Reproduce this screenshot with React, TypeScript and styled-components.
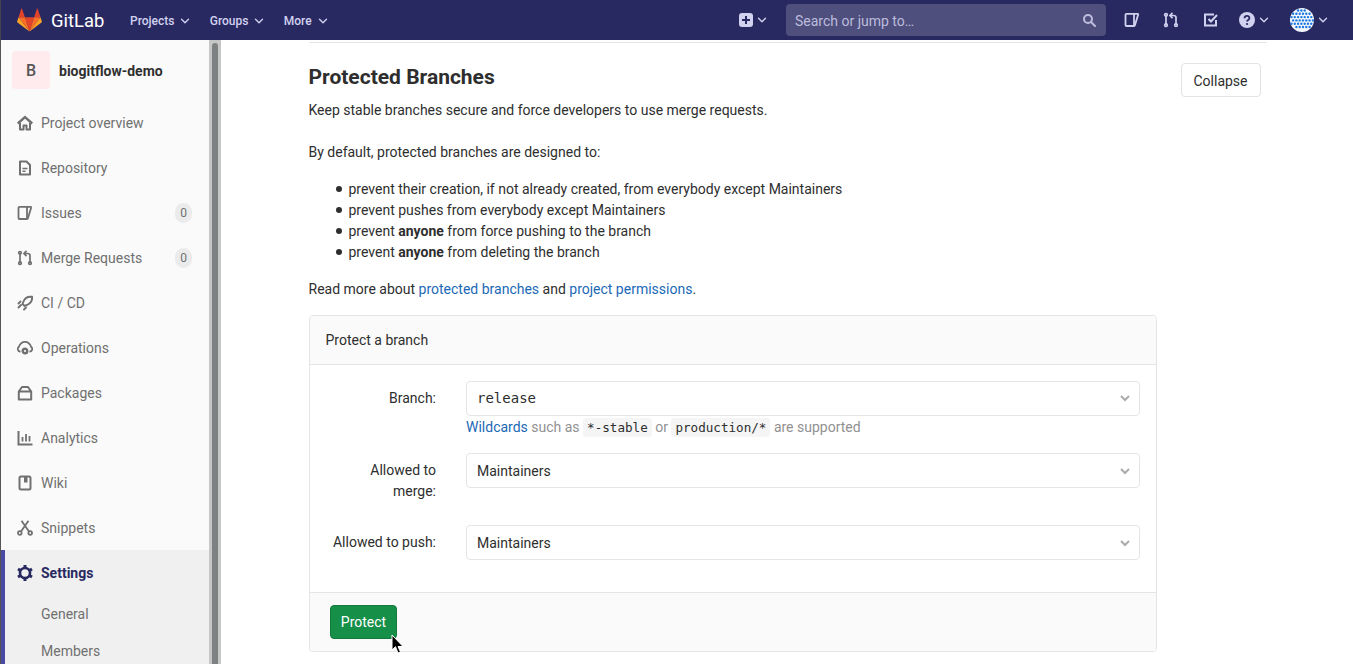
import React from 'react';
import styled, { createGlobalStyle } from 'styled-components';

const Global = createGlobalStyle`
  html, body { margin: 0; padding: 0; height: 664px; overflow: hidden; background: #fff; }
  body { font-family: Roboto, "Liberation Sans", sans-serif; font-size: 14px; color: #2e2e2e; }
  * { box-sizing: border-box; }
`;

const Page = styled.div`
  width: 1353px; height: 664px; display: flex; flex-direction: column; overflow: hidden; position: relative;
`;
const Navbar = styled.header`
  height: 40px; flex: none; background: #292961; display: flex; align-items: center; border-left: 1px solid #44444f; color: #d1d1f0;
`;
const Brand = styled.div`
  display: flex; align-items: center; margin-left: 16px; width: 113px; gap: 9px; color: #fff; font-size: 18.4px;
`;
const BrandText = styled.span` padding-top: 1px; `;
const NavLink = styled.div`
  display: flex; align-items: center; gap: 6px; font-size: 12px; font-weight: 500; color: #d1d1f0; margin-right: 19.3px; padding-top: 2px; white-space: nowrap;
`;
const NavSpacer = styled.div` flex: 1; `;
const NavIcon = styled.div<{ $w: number }>`
  width: ${p => p.$w}px; display: flex; align-items: center; justify-content: flex-start; gap: 4px; color: #d1d1f0; flex: none;
`;
const Search = styled.div`
  width: 320px; height: 32px; background: #4f4f7e; border-radius: 4px; display: flex; align-items: center; justify-content: space-between; padding: 0 10px 0 9px; font-size: 14px; color: #bcbcdc; margin-right: 18px; flex: none;
`;
const SearchText = styled.span` padding-top: 2px; `;
const Body = styled.div` flex: 1; display: flex; min-height: 0; `;
const Sidebar = styled.aside`
  width: 221px; flex: none; display: flex; border-left: 1px solid #555; overflow: hidden;
`;
const SideInner = styled.nav` flex: 1; background: #fafafa; min-width: 0; `;
const ScrollTrack = styled.div`
  width: 12px; flex: none; background: #c6c6c6; padding: 3px 3px 0 3px;
`;
const ScrollThumb = styled.div`
  width: 6px; height: 100%; background: #7d8181; border-radius: 3px 3px 0 0;
`;
const ProjectHead = styled.div`
  display: flex; align-items: flex-start; height: 60px; padding: 11px 0 0 11px; gap: 9px;
`;
const Avatar = styled.div`
  width: 38px; height: 38px; background: #ffebee; border-radius: 4px; display: flex; align-items: center; justify-content: center; font-size: 16px; font-weight: 500; color: #555;
`;
const ProjectName = styled.div` font-weight: 700; font-size: 14px; color: #303030; line-height: 38px; height: 38px; padding-top: 1px; `;
const Item = styled.div`
  height: 45px; display: flex; align-items: center; padding-left: 16px; padding-right: 17px; gap: 8px; color: #707070;
`;
const ActiveGroup = styled.div`
  background: #f0f0f0; border-left: 4px solid #4b4ba3; height: 200px;
`;
const ActiveItem = styled.div`
  height: 46px; display: flex; align-items: center; padding-left: 12px; gap: 8px; color: #292961; font-weight: 700;
`;
const SubItem = styled.div<{ $h: number }>`
  height: ${p => p.$h}px; display: flex; align-items: center; padding-left: 36px; color: #707070;
`;
const IconSlot = styled.span`
  width: 16px; height: 16px; flex: none; display: inline-flex;
  svg { width: 16px; height: 16px; display: block; }
`;
const ItemLabel = styled.span` flex: 1; `;
const Count = styled.span`
  min-width: 17px; height: 20px; background: #ebebeb; border-radius: 10px; font-size: 12px; display: flex; align-items: center; justify-content: center; color: #707070;
`;
const Main = styled.main` flex: 1; min-width: 0; padding: 2px 86px 0 87.5px; overflow: hidden; `;
const Section = styled.section` border-top: 1px solid #e5e5e5; `;
const TitleRow = styled.div` display: flex; justify-content: space-between; align-items: flex-start; padding-top: 20px; padding-right: 6px; height: 52px; `;
const Title = styled.h4` margin: 0; font-size: 21px; line-height: 28px; font-weight: 700; color: #2e2e2e; `;
const Collapse = styled.button`
  width: 80px; height: 34px; background: #fff; border: 1px solid #e3e3e3; border-radius: 4px; font: 14px Roboto, sans-serif; color: #2e2e2e; padding: 2px 1px 0 0;
`;
const Para = styled.p<{ $mt: number }>` margin: ${p => p.$mt}px 0 0; line-height: 21px; `;
const List = styled.ul` margin: 16px 0 0; padding: 0 0 0 40px; line-height: 21px; list-style: none; `;
const Bullet = styled.li`
  &::before {
    content: ""; display: inline-block; width: 6px; height: 6px; border-radius: 50%; background: #2e2e2e;
    margin-left: -12.5px; margin-right: 6.5px; vertical-align: 2px;
  }
`;
const A = styled.span` color: #1b69b6; `;
const Card = styled.div`
  width: 848px; margin-top: 15px; border: 1px solid #e5e5e5; border-radius: 4px; overflow: hidden;
`;
const CardHead = styled.div`
  height: 49px; background: #fafafa; border-bottom: 1px solid #e5e5e5; display: flex; align-items: center; padding-left: 16px;
`;
const CardBody = styled.div` padding: 16px 16px 0 0; height: 227px; `;
const Row = styled.div<{ $h: number }>` display: flex; height: ${p => p.$h}px; `;
const Label = styled.label`
  width: 126.5px; flex: none; text-align: right; line-height: 21px; padding: 7px 0 0 16px; margin-right: 29.5px;
`;
const Field = styled.div` flex: 1; min-width: 0; `;
const Select = styled.div<{ $mono?: boolean }>`
  height: 35px; border: 1px solid #e5e5e5; border-radius: 4px; background: #fff; display: flex; align-items: center; justify-content: space-between; padding: ${p => (p.$mono ? '0 9px 1px 10.5px' : '0 9px 0 10.5px')}; color: #2e2e2e;
  font-family: ${p => (p.$mono ? '"DejaVu Sans Mono", monospace' : 'Roboto, sans-serif')};
  font-size: 14px;
`;
const SelectChev = styled.span` color: #ababab; display: inline-flex; `;
const Help = styled.div` margin-top: 1px; padding-left: .5px; line-height: 21px; color: #919191; white-space: nowrap; `;
const Code = styled.code`
  font-family: "DejaVu Sans Mono", monospace; font-size: 12.6px; background: #f5f5f5; color: #2e2e2e; border-radius: 3px; padding: 2px 4px;
`;
const CardFoot = styled.div`
  height: 59px; background: #fafafa; border-top: 1px solid #e5e5e5; padding: 12px 0 0 20px;
`;
const Protect = styled.button`
  width: 67px; height: 34px; background: #168f48; border: 1px solid #127a3d; border-radius: 4px; color: #fff; font: 14px Roboto, sans-serif; padding: 0 0 0 1px;
`;
const Cursor = styled.svg`
  position: absolute; left: 391px; top: 634px; width: 14px; height: 21px;
`;

const Logo = () => (
  <svg width="25" height="24" viewBox="0 0 36 34">
    <path d="M18 33.500 24.600 13H11.400z" fill="#e24329" />
    <path d="M18 33.500 11.400 13H2.200z" fill="#fc6d26" />
    <path d="M2.200 13 .2 19.200c-.2.600 0 1.200.5 1.500L18 33.500z" fill="#fca326" />
    <path d="M2.200 13h9.200L7.400 1c-.2-.6-1.100-.6-1.300 0z" fill="#e24329" />
    <path d="M18 33.500 24.600 13h9.200z" fill="#fc6d26" />
    <path d="M33.800 13l2 6.200c.2.600 0 1.200-.5 1.500L18 33.500z" fill="#fca326" />
    <path d="M33.800 13h-9.200l4-12c.2-.6 1.100-.6 1.300 0z" fill="#e24329" />
  </svg>
);
const Chev = ({ size = 10 }: { size?: number }) => (
  <svg width={size} height={size} viewBox="0 0 10 10" fill="none" stroke="currentColor" strokeWidth="1.400" strokeLinecap="round" strokeLinejoin="round">
    <path d="M1.500 3.300 5 6.800l3.500-3.500" />
  </svg>
);
const FatChev = () => (
  <svg width="10" height="10" viewBox="0 0 10 10" fill="none" stroke="currentColor" strokeWidth="2">
    <path d="M1 3l4 4 4-4" />
  </svg>
);
const s = { fill: 'none', stroke: 'currentColor', strokeWidth: 2 } as const;
const IcHome = () => <svg viewBox="0 0 16 16" {...s}><path d="M.8 8.500 8 2l7.200 6.500" strokeWidth="2.400" /><path d="M3 8v6.500h3.500v-4h3v4H13V8" strokeLinejoin="round" strokeWidth="2" /></svg>;
const IcDoc = () => <svg viewBox="0 0 16 16" {...s}><path d="M3 1.500h6.500L13 5v9.500H3z" strokeLinejoin="round" /><path d="M5.500 8.500h5M5.500 11.300h3" strokeWidth="1.600" /></svg>;
const IcIssue = () => <svg viewBox="0 0 16 16" fill="none" stroke="currentColor" strokeWidth="1.800" strokeLinejoin="round"><path d="M2.500 1.800h11.200c.4 0 .6.300.5.700L11 13c-.2.700-.5 1-1 1H2.500c-.6 0-1-.4-1-1V2.800c0-.6.400-1 1-1z" /><path d="M10 1.800V14" /></svg>;
const IcMR = () => <svg viewBox="0 0 16 16" fill="none" stroke="currentColor" strokeWidth="1.700"><circle cx="3" cy="2.800" r="1.300" /><circle cx="3" cy="13.200" r="1.300" /><circle cx="13" cy="13.200" r="1.300" /><path d="M3 4v8M13 12V5.500C13 4 12 3.500 10.500 3.500H8" /><path d="M9.500 .8 7 3.500l2.500 2.700" /></svg>;
const IcRocket = () => <svg viewBox="0 0 16 16" fill="none" stroke="currentColor" strokeWidth="1.900" strokeLinecap="round"><path d="M15 1.800c-4-.5-7 1-8.500 4.700L5.500 9 7.500 11l2.500-1c3.500-1.500 5.500-4.500 5-8.200z" /><path d="M1.500 8.500 3.500 6.500M7 14.500l2-2M1.500 12.500 4 10" /></svg>;
const IcCloud = () => <svg viewBox="0 0 16 16" fill="none" stroke="currentColor" strokeWidth="1.800"><path d="M3.500 11.500H3a2.500 2.500 0 0 1-1.200-4.500C3 3.500 5.500 1.800 8 1.800s5 1.700 6.200 5.200a2.500 2.500 0 0 1-1.200 4.500h-.5" /><circle cx="8" cy="11" r="2.300" strokeWidth="2.400" /></svg>;
const IcPkg = () => <svg viewBox="0 0 16 16" {...s}><path d="M1.800 6.500V14.500h12.400V6.500zM1.800 6.500 5 2h6l3.200 4.500" strokeLinejoin="round" /></svg>;
const IcChart = () => <svg viewBox="0 0 16 16" fill="none" stroke="currentColor" strokeWidth="2"><path d="M1.500 1v13.500H15.500" /><path d="M5.500 7v4.500M9 4v7.500M12.500 6v5.500" strokeWidth="1.800" /></svg>;
const IcBook = () => <svg viewBox="0 0 16 16" {...s}><rect x="2.500" y="1.500" width="11" height="13" rx="1.500" /><path d="M7 1.500h3.500v6H7z" fill="currentColor" strokeWidth="0" /></svg>;
const IcScissors = () => <svg viewBox="0 0 16 16" fill="none" stroke="currentColor" strokeWidth="1.800"><circle cx="2.800" cy="13" r="1.800" /><circle cx="13.200" cy="13" r="1.800" /><path d="M4 11.500 11.500.8M12 11.500 4.500.8" /></svg>;
const IcGear = () => <svg viewBox="0 0 16 16" fill="none" stroke="currentColor"><circle cx="8" cy="8" r="5" strokeWidth="2.600" /><path d="M8 0v3M8 13v3M1 4l2.500 1.500M12.500 10.500 15 12M1 12l2.500-1.500M12.500 5.500 15 4" strokeWidth="3" /></svg>;
const IcPlus = () => <svg width="14" height="14" viewBox="0 0 14 14"><rect width="14" height="14" rx="3" fill="currentColor" /><path d="M7 3v8M3 7h8" stroke="#292961" strokeWidth="2" /></svg>;
const IcSearch = () => <svg width="14" height="14" viewBox="0 0 14 14" fill="none" stroke="#bcbcdc" strokeWidth="2"><circle cx="6" cy="6" r="4" /><path d="m9 9 4 4" strokeLinecap="round" /></svg>;
const IcTodo = () => <svg viewBox="0 0 16 16" fill="none" stroke="currentColor" strokeWidth="2"><path d="M13 8v5.500H2V2.500h9" /><path d="m5.500 7 2.500 2.500 6-6.500" /></svg>;
const IcHelp = () => <svg width="16" height="16" viewBox="0 0 16 16"><circle cx="8" cy="8" r="8" fill="currentColor" /><path d="M5.600 6.200c0-3 4.800-3 4.800 0 0 1.800-2.400 1.600-2.400 3.300" fill="none" stroke="#292961" strokeWidth="1.800" /><circle cx="8" cy="12" r="1.100" fill="#292961" /></svg>;

const globeDots: [number, number][] = [];
let globeRow = 0;
for (let y = 2.500; y <= 22; y += 3.300) {
  const shift = globeRow % 2 ? 1.600 : 0;
  for (let x = 1.500 + shift; x <= 23; x += 3.300) {
    if (Math.hypot(x - 12, y - 12) < 11.200) globeDots.push([x, y]);
  }
  globeRow += 1;
}
const Globe = () => (
  <svg width="24" height="24" viewBox="0 0 24 24">
    <circle cx="12" cy="12" r="12" fill="#f4f7fb" />
    {globeDots.map(([x, y]) => (
      <circle key={`${x}-${y}`} cx={x} cy={y} r="1.200" fill="#1f7ae0" />
    ))}
  </svg>
);

const items: [string, React.ReactNode, number?][] = [
  ['Project overview', <IcHome />],
  ['Repository', <IcDoc />],
  ['Issues', <IcIssue />, 0],
  ['Merge Requests', <IcMR />, 0],
  ['CI / CD', <IcRocket />],
  ['Operations', <IcCloud />],
  ['Packages', <IcPkg />],
  ['Analytics', <IcChart />],
  ['Wiki', <IcBook />],
  ['Snippets', <IcScissors />],
];

export default function App() {
  return (
    <Page>
      <Global />
      <Navbar>
        <Brand><Logo /><BrandText>GitLab</BrandText></Brand>
        <NavLink>Projects <Chev /></NavLink>
        <NavLink>Groups <Chev /></NavLink>
        <NavLink>More <Chev /></NavLink>
        <NavSpacer />
        <NavIcon $w={47}><IcPlus /><Chev /></NavIcon>
        <Search><SearchText>Search or jump to…</SearchText><IcSearch /></Search>
        <NavIcon $w={39}><IconSlot><IcIssue /></IconSlot></NavIcon>
        <NavIcon $w={40}><IconSlot><IcMR /></IconSlot></NavIcon>
        <NavIcon $w={36}><IconSlot><IcTodo /></IconSlot></NavIcon>
        <NavIcon $w={51}><IcHelp /><Chev /></NavIcon>
        <NavIcon $w={63}><Globe /><Chev /></NavIcon>
      </Navbar>
      <Body>
        <Sidebar>
          <SideInner>
            <ProjectHead><Avatar>B</Avatar><ProjectName>biogitflow-demo</ProjectName></ProjectHead>
            {items.map(([name, icon, count]) => (
              <Item key={name}>
                <IconSlot>{icon}</IconSlot>
                <ItemLabel>{name}</ItemLabel>
                {count !== undefined && <Count>{count}</Count>}
              </Item>
            ))}
            <ActiveGroup>
              <ActiveItem><IconSlot><IcGear /></IconSlot>Settings</ActiveItem>
              <SubItem $h={36}>General</SubItem>
              <SubItem $h={37}>Members</SubItem>
            </ActiveGroup>
          </SideInner>
          <ScrollTrack><ScrollThumb /></ScrollTrack>
        </Sidebar>
        <Main>
          <Section>
            <TitleRow>
              <Title>Protected Branches</Title>
              <Collapse>Collapse</Collapse>
            </TitleRow>
            <Para $mt={5}>Keep stable branches secure and force developers to use merge requests.</Para>
            <Para $mt={21}>By default, protected branches are designed to:</Para>
            <List>
              <Bullet>prevent their creation, if not already created, from everybody except Maintainers</Bullet>
              <Bullet>prevent pushes from everybody except Maintainers</Bullet>
              <Bullet>prevent <b>anyone</b> from force pushing to the branch</Bullet>
              <Bullet>prevent <b>anyone</b> from deleting the branch</Bullet>
            </List>
            <Para $mt={16}>Read more about <A>protected branches</A> and <A>project permissions</A>.</Para>
            <Card>
              <CardHead>Protect a branch</CardHead>
              <CardBody>
                <Row $h={72}>
                  <Label>Branch:</Label>
                  <Field>
                    <Select $mono>release<SelectChev><FatChev /></SelectChev></Select>
                    <Help><A>Wildcards</A> such as <Code>*-stable</Code> or <Code>production/*</Code> are supported</Help>
                  </Field>
                </Row>
                <Row $h={72}>
                  <Label>Allowed to merge:</Label>
                  <Field><Select>Maintainers<SelectChev><FatChev /></SelectChev></Select></Field>
                </Row>
                <Row $h={50}>
                  <Label>Allowed to push:</Label>
                  <Field><Select>Maintainers<SelectChev><FatChev /></SelectChev></Select></Field>
                </Row>
              </CardBody>
              <CardFoot><Protect>Protect</Protect></CardFoot>
            </Card>
          </Section>
        </Main>
      </Body>
      <Cursor viewBox="0 0 14 21">
        <path d="M1 1v15l3.500-3.300L7 19l2.500-1-2.500-5.500h5z" fill="#000" stroke="#fff" strokeWidth="1" />
      </Cursor>
    </Page>
  );
}
